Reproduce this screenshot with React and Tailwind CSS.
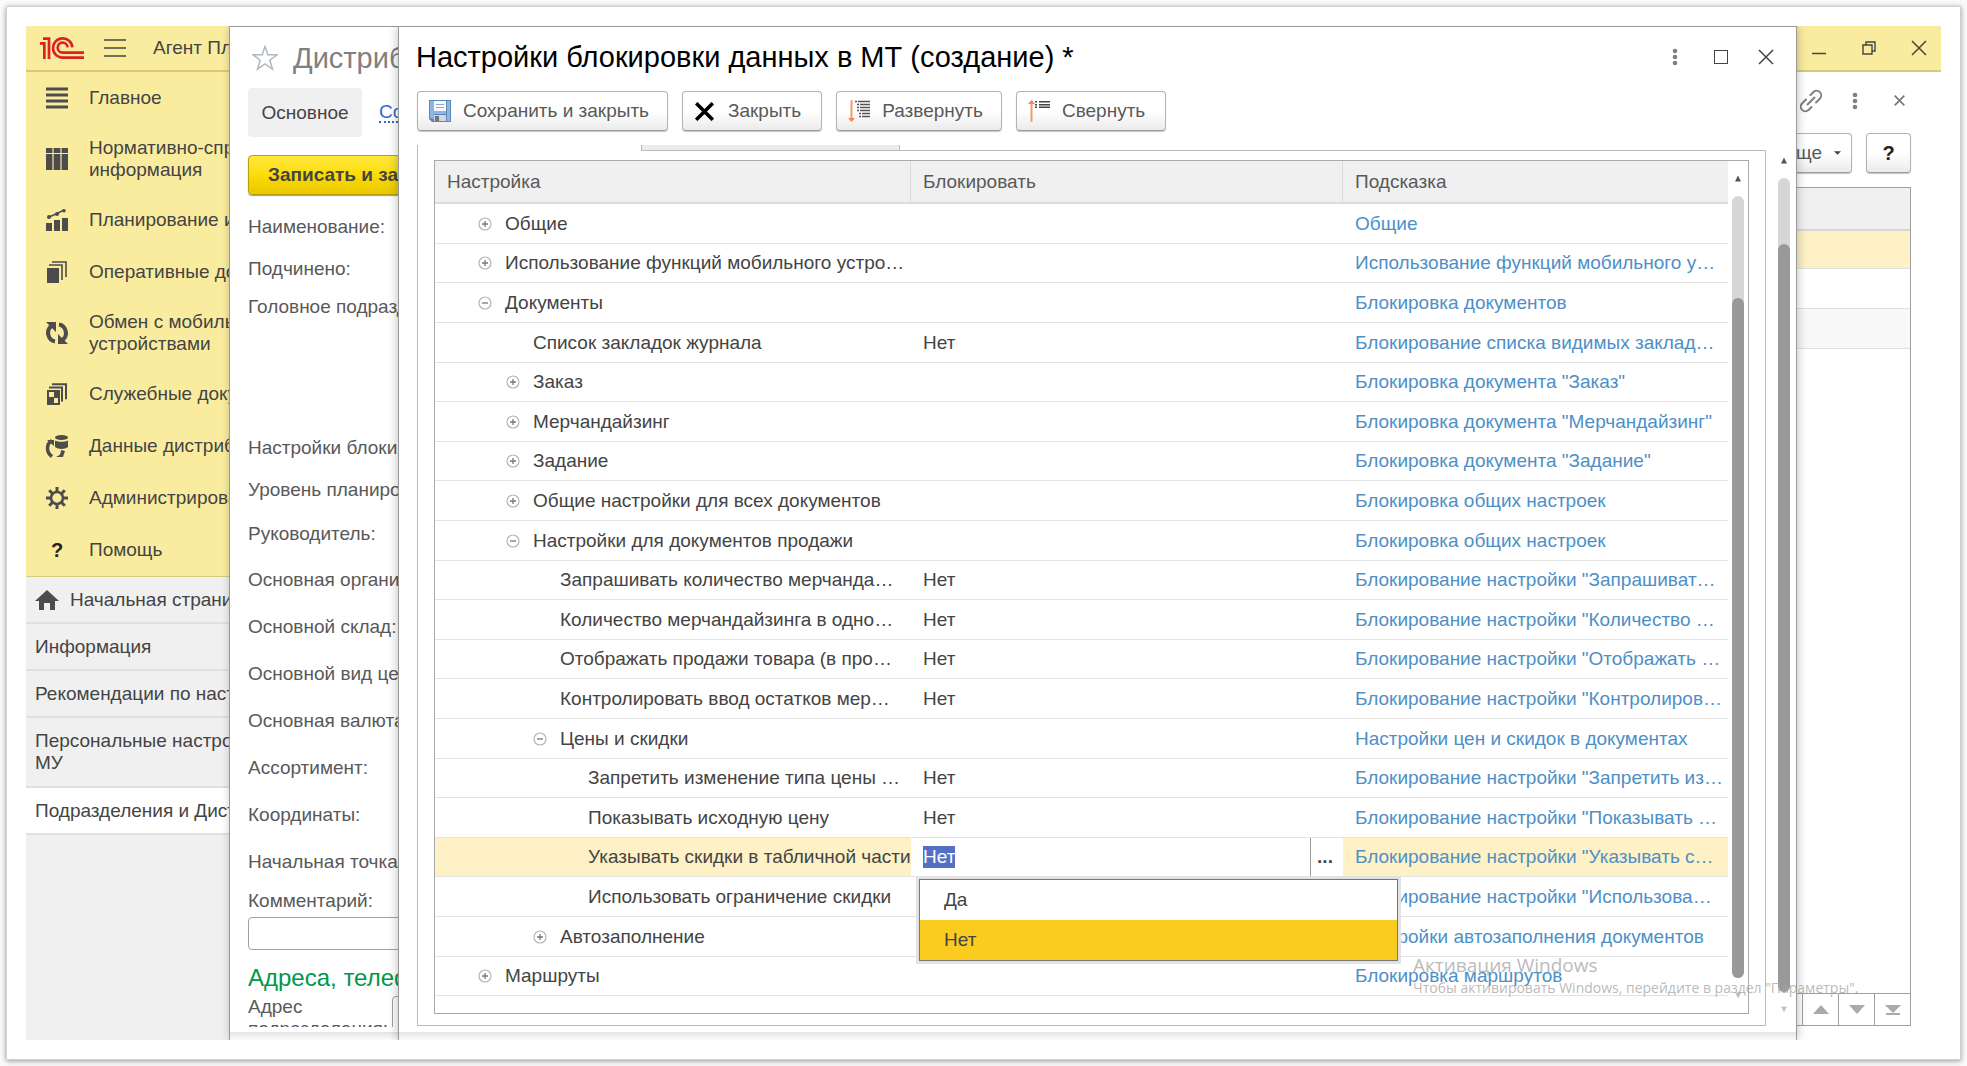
import React, { useEffect, useRef } from "react";

const INDENT = ["pl-[70px]", "pl-[98px]", "pl-[125px]", "pl-[153px]"];

const rows = [
  { level: 0, toggle: "plus", name: "Общие", hint: "Общие" },
  { level: 0, toggle: "plus", name: "Использование функций мобильного устро…", hint: "Использование функций мобильного у…" },
  { level: 0, toggle: "minus", name: "Документы", hint: "Блокировка документов" },
  { level: 1, name: "Список закладок журнала", value: "Нет", hint: "Блокирование списка видимых заклад…" },
  { level: 1, toggle: "plus", name: "Заказ", hint: "Блокировка документа \"Заказ\"" },
  { level: 1, toggle: "plus", name: "Мерчандайзинг", hint: "Блокировка документа \"Мерчандайзинг\"" },
  { level: 1, toggle: "plus", name: "Задание", hint: "Блокировка документа \"Задание\"" },
  { level: 1, toggle: "plus", name: "Общие настройки для всех документов", hint: "Блокировка общих настроек" },
  { level: 1, toggle: "minus", name: "Настройки для документов продажи", hint: "Блокировка общих настроек" },
  { level: 2, name: "Запрашивать количество мерчанда…", value: "Нет", hint: "Блокирование настройки \"Запрашиват…" },
  { level: 2, name: "Количество мерчандайзинга в одно…", value: "Нет", hint: "Блокирование настройки \"Количество …" },
  { level: 2, name: "Отображать продажи товара (в про…", value: "Нет", hint: "Блокирование настройки \"Отображать …" },
  { level: 2, name: "Контролировать ввод остатков мер…", value: "Нет", hint: "Блокирование настройки \"Контролиров…" },
  { level: 2, toggle: "minus", name: "Цены и скидки", hint: "Настройки цен и скидок в документах" },
  { level: 3, name: "Запретить изменение типа цены …", value: "Нет", hint: "Блокирование настройки \"Запретить из…" },
  { level: 3, name: "Показывать исходную цену", value: "Нет", hint: "Блокирование настройки \"Показывать …" },
  { level: 3, name: "Указывать скидки в табличной части", value: "Нет", hint: "Блокирование настройки \"Указывать с…", editing: true },
  { level: 3, name: "Использовать ограничение скидки", hint: "Блокирование настройки \"Использова…" },
  { level: 2, toggle: "plus", name: "Автозаполнение", hint: "Настройки автозаполнения документов" },
  { level: 0, toggle: "plus", name: "Маршруты", hint: "Блокировка маршрутов" },
];

const icons = {
  main: (
    <path d="M0 2h22M0 8h22M0 14h22M0 20h22" stroke="currentColor" strokeWidth="3" />
  ),
  table: (
    <>
      <path d="M0 0h22v22H0z" fill="currentColor" />
      <path d="M0 5.500h22M7 0v22M15 0v22" stroke="#faec9f" strokeWidth="1.200" />
    </>
  ),
  plan: (
    <>
      <path d="M0 14h6v8H0zM8 11h6v11H8zM16 9h6v13h-6z" fill="currentColor" />
      <path d="M3 8l7-3 8-4" stroke="currentColor" strokeWidth="1.500" fill="none" />
      <circle cx="3" cy="8" r="2" fill="currentColor" />
      <circle cx="11" cy="5" r="2" fill="currentColor" />
      <circle cx="18" cy="1.800" r="1.800" fill="currentColor" />
    </>
  ),
  docs: (
    <>
      <path d="M1 7h12v15H1z" fill="currentColor" />
      <path d="M3 4h13v15M6 1h14v15" stroke="currentColor" strokeWidth="1.600" fill="none" />
    </>
  ),
  sync: (
    <>
      <path d="M9 2.500C3 4 1 9 2.500 13.500 3.500 17 6 19 9 19.500M13 19.500c6-1.500 8-6.500 6.500-11C18.500 5 16 3 13 2.500" stroke="currentColor" strokeWidth="4" fill="none" />
      <path d="M0 0h10v10zM22 22H12V12z" fill="currentColor" />
    </>
  ),
  service: (
    <>
      <path d="M2 8h11v13H2z" stroke="currentColor" strokeWidth="2" fill="none" />
      <path d="M8 8h5v7H8zM2 14h6v7H2z" fill="currentColor" />
      <path d="M3 4.500h13v14M6 1.200h14v15" stroke="currentColor" strokeWidth="2" fill="none" />
    </>
  ),
  data: (
    <>
      <ellipse cx="15.500" cy="2.500" rx="6.500" ry="2.500" fill="currentColor" />
      <path d="M9 5.500c3 1.800 10 1.800 13 0V12c-3 2.500-10 2.500-13 0z" fill="currentColor" />
      <path d="M6 5.500C0 9 0 17 6 21.500" stroke="currentColor" strokeWidth="3.500" fill="none" />
      <path d="M1 5h7v6zM15 15l4 1-2 6h-7c3-1 5-3 5-7z" fill="currentColor" />
    </>
  ),
  gear: (
    <>
      <circle cx="11" cy="11" r="6" stroke="currentColor" strokeWidth="2.600" fill="none" />
      <path d="M11 0v5M11 17v5M0 11h5M17 11h5M3.200 3.200l3.500 3.500M15.300 15.300l3.500 3.500M18.800 3.200l-3.500 3.500M6.700 15.300l-3.500 3.500" stroke="currentColor" strokeWidth="3" />
    </>
  ),
};

const sections = [
  { icon: "main", label: "Главное" },
  { icon: "table", label: "Нормативно-справочная\nинформация", tall: true },
  { icon: "plan", label: "Планирование и" },
  { icon: "docs", label: "Оперативные документы" },
  { icon: "sync", label: "Обмен с мобильными\nустройствами", tall: true },
  { icon: "service", label: "Служебные документы" },
  { icon: "data", label: "Данные дистрибьютора" },
  { icon: "gear", label: "Администрирование" },
  { icon: "help", label: "Помощь" },
];

const fields = [
  ["Наименование:", "h-[42px]"],
  ["Подчинено:", "h-[42px]"],
  ["Головное подразделение:", "h-[34px]"],
  ["", "h-[104px]"],
  ["Настройки блокировки:", "h-10"],
  ["Уровень планирования:", "h-11"],
  ["Руководитель:", "h-11"],
  ["Основная организация:", "h-[47px]"],
  ["Основной склад:", "h-[47px]"],
  ["Основной вид цен:", "h-[47px]"],
  ["Основная валюта:", "h-[47px]"],
  ["Ассортимент:", "h-[47px]"],
  ["Координаты:", "h-[47px]"],
  ["Начальная точка:", "h-[47px]"],
];

const BUTTON = "flex h-10 items-center rounded-[4px] border border-[#b3b3b3] border-b-[#9d9d9d] bg-gradient-to-b from-white from-50% to-[#ebebeb] text-[19px] text-[#595959] shadow-[0_1px_1px_#c4c4c4]";

function Logo() {
  return (
    <svg className="h-[22px] w-11" viewBox="0 0 132 66" fill="none" stroke="#dc2222" strokeWidth="8">
      <path d="M0 19h13v47M9 5h18v61" />
      <path d="M97 31A29 29 0 1 0 68 62h64" />
      <path d="M83 31A15 15 0 1 0 68 47h64" />
    </svg>
  );
}

function Dots() {
  return (
    <svg className="h-[18px] w-[6px]" viewBox="0 0 6 18" fill="#808080">
      <circle cx="3" cy="3" r="2.300" />
      <circle cx="3" cy="9" r="2.300" />
      <circle cx="3" cy="15" r="2.300" />
    </svg>
  );
}

function Cross({ className, color = "#444", width = 1.5 }) {
  return (
    <svg className={className} viewBox="0 0 16 16" stroke={color} strokeWidth={width}>
      <path d="M1 1l14 14M15 1L1 15" />
    </svg>
  );
}

function Toggle({ kind }) {
  return (
    <svg className="size-[14px]" viewBox="0 0 14 14" fill="none">
      <circle cx="7" cy="7" r="6" stroke="#b5b5b5" strokeWidth="1.200" />
      <path d={kind === "plus" ? "M4 7h6M7 4v6" : "M4 7h6"} stroke="#777" strokeWidth="1.300" />
    </svg>
  );
}

function ScrollBar({ className, track }) {
  return (
    <div className={"flex w-3 shrink-0 flex-col items-center " + className} aria-hidden="true">
      <svg className="h-[7px] w-[6px]" viewBox="0 0 8 8"><path d="M4 0l4 8H0z" fill="#555" /></svg>
      <div className="mt-[14px] flex w-full flex-1 flex-col rounded-full bg-[#d6d6d6]">
        <div className={track} />
        <div className="flex-1 rounded-full bg-[#999]" />
      </div>
      <svg className="mt-[14px] h-[7px] w-[6px]" viewBox="0 0 8 8"><path d="M0 0h8L4 8z" fill="#c4c4c4" /></svg>
    </div>
  );
}

function Sidebar() {
  const tab = "flex w-full items-center border-b-2 border-[#e0e0e0] pl-[9px] text-left whitespace-pre";
  return (
    <nav className="flex w-[300px] shrink-0 flex-col bg-[#f0f0f0]">
      <div className="border-b border-[#d8ca78] bg-[#faec9f]">
        {sections.map((item) => (
          <button key={item.label} className={"flex w-full items-center pl-5 text-left whitespace-pre " + (item.tall ? "h-[70px]" : "h-[52px]")}>
            {item.icon === "help"
              ? <span className="w-[22px] text-center text-[20px] font-bold text-[#222]">?</span>
              : <svg className="size-[22px] shrink-0 overflow-visible text-[#4c4c4c]" viewBox="0 0 22 22">{icons[item.icon]}</svg>}
            <span className="ml-[21px]">{item.label}</span>
          </button>
        ))}
      </div>
      <button className={tab + " h-[47px]"}>
        <svg className="h-5 w-6" viewBox="0 0 24 20"><path d="M12 0l12 11h-4v9h-5v-7H9v7H4v-9H0z" fill="#4c4c4c" /></svg>
        <span className="ml-[11px]">Начальная страница</span>
      </button>
      <button className={tab + " h-[47px]"}>Информация</button>
      <button className={tab + " h-[47px]"}>Рекомендации по настройке</button>
      <button className={tab + " h-[70px]"}>{"Персональные настройки\nМУ"}</button>
      <button className={tab + " h-[47px] bg-white"}>Подразделения и Дистрибьюторы</button>
    </nav>
  );
}

function BackForm() {
  return (
    <main className="flex min-w-0 flex-1 flex-col bg-white pr-[30px] pb-[14px]">
      <div className="flex h-[57px] items-center justify-end gap-[29px] pr-[6px]">
        <button aria-label="Ссылка">
          <svg className="size-6" viewBox="0 0 24 24" fill="none" stroke="#808080" strokeWidth="2" strokeLinecap="round">
            <path d="M8.500 15.500l7-7M11.500 6l3-3a4.600 4.600 0 0 1 6.500 6.500l-4 4M12.500 18l-3 3A4.600 4.600 0 0 1 3 14.500l4-4" />
          </svg>
        </button>
        <button aria-label="Меню"><Dots /></button>
        <button className="ml-[7px]" aria-label="Закрыть форму"><Cross className="size-[11px]" color="#777" width={2.4} /></button>
      </div>
      <div className="mt-1 flex justify-end gap-[14px]">
        <button className={BUTTON + " pr-[10px] pl-4"}>
          <span>Еще</span>
          <svg className="ml-3 h-1 w-[7px]" viewBox="0 0 8 4"><path d="M0 0h8L4 4z" fill="#444" /></svg>
        </button>
        <button className={BUTTON + " w-[45px] justify-center"}><span className="text-[20px] font-bold text-[#222]">?</span></button>
      </div>
      <div className="mt-[14px] flex flex-1 flex-col border border-[#a0a0a0]">
        <div className="h-[43px] border-b-2 border-[#d6d6d6] bg-[#f0f0f0]" />
        <div className="h-[38px] border-b border-[#e0e0e0] bg-[#fdf1c5]" />
        <div className="h-10 border-b border-[#e0e0e0]" />
        <div className="h-10 border-b border-[#e0e0e0] bg-[#f8f8f8]" />
        <div className="flex-1" />
        <div className="flex h-8 justify-end border-t border-[#a0a0a0]">
          <button className="flex w-9 items-center justify-center border-l border-[#a0a0a0]" aria-label="Вверх">
            <svg className="h-[9px] w-4" viewBox="0 0 16 9"><path d="M8 0l8 9H0z" fill="#aaa" /></svg>
          </button>
          <button className="flex w-9 items-center justify-center border-l border-[#a0a0a0]" aria-label="Вниз">
            <svg className="h-[9px] w-4" viewBox="0 0 16 9"><path d="M0 0h16L8 9z" fill="#aaa" /></svg>
          </button>
          <button className="flex w-9 items-center justify-center border-l border-[#a0a0a0]" aria-label="В конец">
            <svg className="h-[10px] w-4" viewBox="0 0 16 10"><path d="M0 0h16L8 8zM1 8h14v2H1z" fill="#aaa" /></svg>
          </button>
        </div>
      </div>
    </main>
  );
}

function UnitWindow() {
  return (
    <section className="absolute inset-y-0 left-[203px] flex w-[480px] flex-col border-x border-t border-[#999] bg-white text-[#595959] shadow-[0_0_8px_#0003]">
      <div className="flex min-h-0 flex-1 flex-col overflow-hidden pl-[18px]">
        <div className="flex h-[61px] shrink-0 items-center gap-[15px] pl-1">
          <svg className="size-[26px]" viewBox="0 0 26 26" fill="none" stroke="#b0b8c0" strokeWidth="1.500">
            <path d="M13 1.500l2.800 8.300H25l-7.200 5.400 2.700 9L13 19l-7.500 5.200 2.700-9L1 9.800h9.200z" />
          </svg>
          <h2 className="text-[29px] text-[#808080]">Дистрибьютор</h2>
        </div>
        <div className="flex h-[49px] shrink-0 items-center gap-[17px]">
          <button className="h-[49px] w-[114px] rounded-[4px] bg-[#f0f0f0] text-[#444]">Основное</button>
          <a href="#contacts" className="border-b-2 border-dotted border-[#3568c8] leading-[19px] text-[#3568c8]">Сотрудники</a>
        </div>
        <button className="mt-[18px] flex h-10 w-60 shrink-0 items-center rounded-[4px] border border-[#b5a012] bg-gradient-to-b from-[#ffe838] via-[#fcdc00] to-[#e8c800] pl-[19px] text-[19px] font-bold whitespace-nowrap text-[#444] shadow-[0_1px_1px_#999]">
          Записать и закрыть
        </button>
        <div className="mt-[11px] shrink-0">
          {fields.map(([label, height], i) => (
            <div key={i} className={"flex items-center whitespace-nowrap " + height}>{label}</div>
          ))}
          <label htmlFor="comment" className="flex h-8 items-center">Комментарий:</label>
          <input id="comment" className="block h-[33px] w-96 rounded-[4px] border border-[#a0a0a0] bg-white px-2 outline-none" />
          <h3 className="mt-[10px] h-9 text-[24px] leading-9 text-[#00984a]">Адреса, телефоны</h3>
          <div className="flex items-start">
            <label htmlFor="address" className="w-36 leading-[22px]">Адрес подразделения:</label>
            <input id="address" className="h-11 w-60 rounded-[4px] border border-[#a0a0a0] bg-white" />
          </div>
        </div>
      </div>
      <div className="h-[5px] shrink-0" />
      <div className="h-2 shrink-0 bg-gradient-to-b from-[#e4e4e4] to-[#fbfbfb]" />
    </section>
  );
}

function ValueEditor({ value }) {
  const input = useRef(null);

  useEffect(() => {
    input.current.focus();
    input.current.select();
  }, []);

  return (
    <>
      <div className="flex h-[38px] items-stretch">
        <input
          ref={input}
          aria-label="Блокировать"
          defaultValue={value}
          className="w-full min-w-0 bg-white pl-3 outline-none selection:bg-[#5470c6] selection:text-white"
        />
        <button className="w-[33px] shrink-0 border-l border-[#999] pr-1 font-bold text-[#444]">...</button>
      </div>
      <ul role="listbox" className="absolute top-full left-2 z-10 mt-[3px] w-[479px] border border-[#777] bg-white shadow-[0_0_0_3px_#e2e2e2]">
        <li role="option" aria-selected="false" className="flex h-10 items-center pl-6">Да</li>
        <li role="option" aria-selected="true" className="flex h-10 items-center bg-[#facc1f] pl-6">Нет</li>
      </ul>
    </>
  );
}

function SettingsTable() {
  const head = "h-[43px] border-b-2 border-[#dcdcdc] bg-[#f0f0f0] text-left font-normal text-[#595959]";
  return (
    <table className="min-w-0 flex-1 table-fixed border-separate border-spacing-0">
      <colgroup>
        <col className="w-[476px]" />
        <col className="w-[432px]" />
        <col />
      </colgroup>
      <thead>
        <tr>
          <th className={head + " border-r pl-3"}>Настройка</th>
          <th className={head + " border-r pl-3"}>Блокировать</th>
          <th className={head + " pl-3"}>Подсказка</th>
        </tr>
      </thead>
      <tbody>
        {rows.map((row, i) => {
          const line = "border-b border-[#e3e3e3] p-0 " + (row.editing ? "bg-[#fdf1c5]" : "");
          return (
            <tr key={i} className={i % 5 === 1 || i % 5 === 4 ? "h-[39px]" : "h-10"}>
              <td className={line}>
                <div className={"flex items-center whitespace-nowrap " + INDENT[row.level]}>
                  {row.toggle && (
                    <button className="-ml-[27px] mr-[13px]" aria-label={row.name}><Toggle kind={row.toggle} /></button>
                  )}
                  {row.name}
                </div>
              </td>
              {row.editing
                ? <td className="relative border-b border-[#e3e3e3] p-0"><ValueEditor value={row.value} /></td>
                : <td className={line}><span className="pl-3">{row.value}</span></td>}
              <td className={line + " whitespace-nowrap"}>
                <a href="#hint" className="block pl-3 text-[#4e8fc7]">{row.hint}</a>
              </td>
            </tr>
          );
        })}
      </tbody>
    </table>
  );
}

function SettingsWindow() {
  return (
    <section className="absolute inset-y-0 right-[144px] left-[372px] flex flex-col border-x border-t border-[#999] bg-white shadow-[0_0_10px_#0004]">
      <div className="flex h-[60px] shrink-0 items-center pr-[22px] pl-[17px]">
        <h1 className="flex-1 text-[29px] text-black">Настройки блокировки данных в МТ (создание) *</h1>
        <button aria-label="Ещё"><Dots /></button>
        <button className="ml-9 size-[14px] border border-[#444]" aria-label="Развернуть окно" />
        <button className="ml-[30px]" aria-label="Закрыть окно"><Cross className="size-4" /></button>
      </div>
      <div className="mt-1 flex shrink-0 gap-[14px] pl-[18px]">
        <button className={BUTTON + " pr-[18px] pl-[11px]"}>
          <svg className="mr-3 size-[22px]" viewBox="0 0 22 22">
            <path d="M0 0h22v22H3l-3-3z" fill="#5a86b8" />
            <path d="M1 1h4v18l-4-1zM18 1h3v20h-3z" fill="#8fb6e0" />
            <path d="M5 1h12v10H5z" fill="#f6f9fd" />
            <path d="M7 4.500h8M7 7.500h8" stroke="#8fa9cc" />
            <path d="M5 11h12v3H5z" fill="#8fb6e0" />
            <path d="M5 15h12v6H5z" fill="#d3d6da" />
            <path d="M6 16h4v5H6z" fill="#6b7785" />
          </svg>
          Сохранить и закрыть
        </button>
        <button className={BUTTON + " pr-5 pl-3"}>
          <Cross className="mr-[14px] size-[19px]" color="#000" width={3} />
          Закрыть
        </button>
        <button className={BUTTON + " pr-[18px] pl-[11px]"}>
          <svg className="mr-3 size-[22px]" viewBox="0 0 22 22">
            <path d="M3.500 0v19" stroke="#f79a6b" strokeWidth="2" />
            <path d="M0 18h7l-3.500 4z" fill="#f4874f" />
            <path d="M7 1.500h2M10 1.500h12M9 4.500h2M12 4.500h10M9 7.500h2M12 7.500h10M9 10.500h2M12 10.500h10M11 13.500h2M14 13.500h8M11 16.500h2M14 16.500h8" stroke="#555" strokeWidth="1.400" />
          </svg>
          Развернуть
        </button>
        <button className={BUTTON + " pr-5 pl-[11px]"}>
          <svg className="mr-3 size-[22px]" viewBox="0 0 22 22">
            <path d="M3.500 3v19" stroke="#f79a6b" strokeWidth="2" />
            <path d="M0 4h7L3.500 0z" fill="#f4874f" />
            <path d="M7 1.700h2M11 1.700h11M7 4.700h2M11 4.700h11M7 7.200h2M11 7.200h11" stroke="#444" strokeWidth="1.600" />
          </svg>
          Свернуть
        </button>
      </div>
      <div className="mt-[14px] flex min-h-0 flex-1 pr-[6px] pl-[18px]">
        <div className="flex min-w-0 flex-1 flex-col">
          <div className="flex h-[6px] shrink-0">
            <div className="w-[224px] border-l border-[#bbb]" />
            <div className="w-[259px] border-x border-b border-[#bbb] bg-[#ebebeb]" />
            <div className="flex-1 border-b border-[#bbb]" />
          </div>
          <div className="mb-[6px] flex-1 border-x border-b border-[#bbb] px-4 pt-[9px] pb-[11px]">
            <div className="flex h-full items-start border border-[#aaa] pr-1">
              <SettingsTable />
              <ScrollBar className="mt-[14px] ml-1 h-[824px]" track="h-[102px]" />
            </div>
          </div>
        </div>
        <ScrollBar className="mt-3 mb-[19px] ml-3" track="h-[66px]" />
      </div>
      <div className="h-2 shrink-0 bg-gradient-to-b from-[#e4e4e4] to-[#fbfbfb]" />
    </section>
  );
}

export default function App() {
  return (
    <div className="flex h-screen bg-[#fafafa] p-[6px] font-['Liberation_Sans',Arial,sans-serif] text-[19px] leading-[22px] text-[#444]">
      <div className="flex flex-1 border border-[#d0d0d0] bg-white p-[19px] shadow-[0_1px_5px_#0006]">
        <div className="relative flex flex-1 flex-col overflow-hidden">
          <header className="flex h-[46px] shrink-0 items-center border-b-2 border-[#d8ca78] bg-[#faec9f] pr-[14px] pl-[14px]">
            <Logo />
            <button className="ml-5" aria-label="Меню">
              <svg className="h-[18px] w-[22px]" viewBox="0 0 22 18" stroke="#444" strokeWidth="1.500"><path d="M0 1h22M0 9h22M0 17h22" /></svg>
            </button>
            <span className="ml-[27px] flex-1">Агент Плюс</span>
            <button aria-label="Свернуть приложение">
              <svg className="size-[14px]" viewBox="0 0 14 14"><path d="M0 12.500h14" stroke="#444" strokeWidth="1.500" /></svg>
            </button>
            <button className="ml-9" aria-label="Восстановить">
              <svg className="size-[14px]" viewBox="0 0 14 14" fill="none" stroke="#444" strokeWidth="1.400"><path d="M1 4h9v9H1zM4 4V1h9v9h-3" /></svg>
            </button>
            <button className="ml-[35px]" aria-label="Закрыть приложение"><Cross className="size-4" /></button>
          </header>
          <div className="flex min-h-0 flex-1">
            <Sidebar />
            <BackForm />
          </div>
          <UnitWindow />
          <SettingsWindow />
          <div className="pointer-events-none absolute right-[73px] bottom-[41px] w-[455px] font-['Open_Sans','Noto_Sans',sans-serif] whitespace-nowrap text-[#a8a8a8]/80">
            <p className="text-[19px] leading-6">Активация Windows</p>
            <p className="text-[14px] leading-[22px]">Чтобы активировать Windows, перейдите в раздел "Параметры".</p>
          </div>
        </div>
      </div>
    </div>
  );
}
